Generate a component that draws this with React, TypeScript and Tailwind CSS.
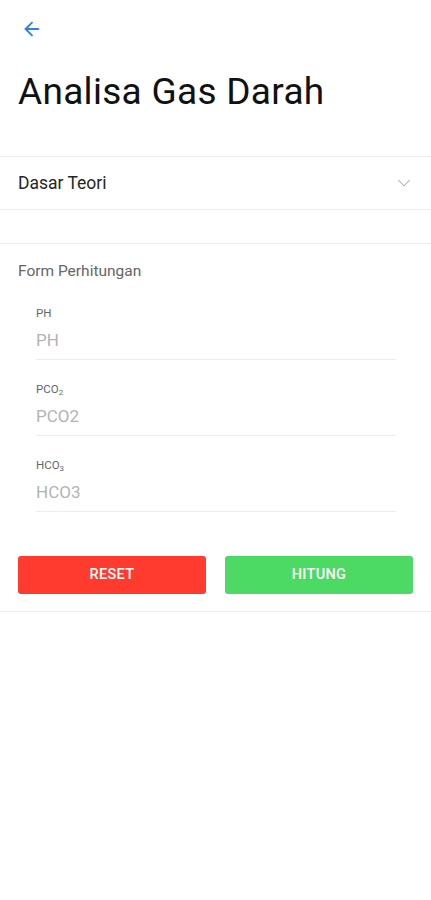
import { ArrowLeft, ChevronDown } from "lucide-react";

const FIELDS = [
  { label: "PH", sub: "", placeholder: "PH" },
  { label: "PCO", sub: "2", placeholder: "PCO2" },
  { label: "HCO", sub: "3", placeholder: "HCO3" },
];

export default function App() {
  return (
    <div className="w-[431px] h-[900px] bg-white font-['Roboto',sans-serif] overflow-hidden">
      {/* Header */}
      <div className="pl-[21px] pt-[18px] h-[40px]">
        <ArrowLeft size={22} strokeWidth={2} className="text-[#2d7fe0]" />
      </div>
      <h1 className="px-[18px] mt-[30px] text-[37px] leading-[44px] text-[#111] tracking-[0.3px]">Analisa Gas Darah</h1>

      <div className="mt-[42px] border-t border-[#ebebeb]" />
      {/* Accordion */}
      <div className="flex items-center justify-between h-[53px] pl-[18px] pr-[16px] border-b border-[#ebebeb]">
        <span className="text-[17.5px] text-[#262626]">Dasar Teori</span>
        <ChevronDown size={22} strokeWidth={1.1} className="text-[#aaaaaa]" />
      </div>

      <div className="mt-[33px] border-t border-[#ebebeb]" />

      {/* Form */}
      <div className="pt-[18px]">
        <div className="px-[18px] text-[15.5px] leading-[19px] text-[#666]">Form Perhitungan</div>
        <div className="mt-[25px] pl-[36px] pr-[35px] flex flex-col gap-[22px]">
          {FIELDS.map((f) => (
            <div key={f.placeholder} className="pb-[7px] border-b border-[#ececec] flex flex-col">
              <div className="text-[11.5px] leading-[14px] text-[#666] h-[14px]">
                {f.label}
                {f.sub && <sub className="text-[8px]">{f.sub}</sub>}
              </div>
              <input
                placeholder={f.placeholder}
                className="mt-[8px] h-[24px] text-[17px] leading-[24px] text-[#333] placeholder:text-[#b3b3b3] outline-none bg-transparent"
              />
            </div>
          ))}
        </div>
      </div>

      {/* Buttons */}
      <div className="mt-[44px] px-[18px] flex gap-[19px]">
        <button className="flex-1 h-[38px] rounded-[3px] bg-[#ff3b30] text-white text-[14.5px] font-medium tracking-[0.3px]">
          RESET
        </button>
        <button className="flex-1 h-[38px] rounded-[3px] bg-[#4cd964] text-white text-[14.5px] font-medium tracking-[0.3px]">
          HITUNG
        </button>
      </div>
      <div className="mt-[17px] border-t border-[#ededed]" />
    </div>
  );
}
